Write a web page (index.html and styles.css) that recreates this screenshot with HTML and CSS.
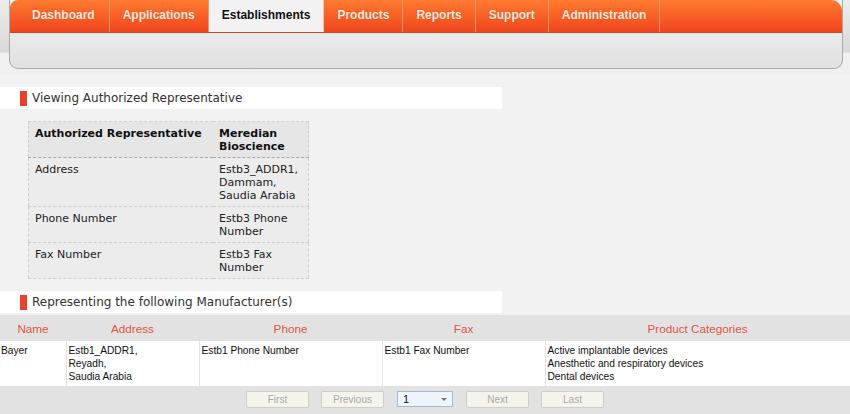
FILE: index.html
```html
<!DOCTYPE html>
<html lang="en">
<head>
    <meta charset="UTF-8">
    <title>Establishments</title>
    <link rel="stylesheet" href="styles.css">
</head>
<body>

    <div class="header">
        <div class="nav-box">
            <ul class="tabs">
                <li class="tab">Dashboard</li>
                <li class="tab">Applications</li>
                <li class="tab active">Establishments</li>
                <li class="tab">Products</li>
                <li class="tab">Reports</li>
                <li class="tab">Support</li>
                <li class="tab">Administration</li>
            </ul>
            <div class="subbar"></div>
        </div>
    </div>

    <div class="section-title"><span class="marker"></span>Viewing Authorized Representative</div>

    <table class="details">
        <tr class="head">
            <td class="label">Authorized Representative</td>
            <td class="value">Meredian Bioscience</td>
        </tr>
        <tr>
            <td class="label">Address</td>
            <td class="value">Estb3_ADDR1,<br>Dammam,<br>Saudia Arabia</td>
        </tr>
        <tr>
            <td class="label">Phone Number</td>
            <td class="value">Estb3 Phone Number</td>
        </tr>
        <tr>
            <td class="label">Fax Number</td>
            <td class="value">Estb3 Fax Number</td>
        </tr>
    </table>

    <div class="section-title second"><span class="marker"></span>Representing the following Manufacturer(s)</div>

    <table class="grid">
        <tr class="grid-head">
            <th class="c-name">Name</th>
            <th class="c-addr">Address</th>
            <th class="c-phone">Phone</th>
            <th class="c-fax">Fax</th>
            <th class="c-cat">Product Categories</th>
        </tr>
        <tr class="grid-row">
            <td>Bayer</td>
            <td>Estb1_ADDR1,<br>Reyadh,<br>Saudia Arabia</td>
            <td>Estb1 Phone Number</td>
            <td>Estb1 Fax Number</td>
            <td>Active implantable devices<br>Anesthetic and respiratory devices<br>Dental devices</td>
        </tr>
        <tr class="grid-foot">
            <td colspan="5">
                <div class="pager">
                    <button class="pager-btn" disabled>First</button>
                    <button class="pager-btn" disabled>Previous</button>
                    <div class="page-select">1<span class="arrow"></span></div>
                    <button class="pager-btn" disabled>Next</button>
                    <button class="pager-btn" disabled>Last</button>
                </div>
            </td>
        </tr>
    </table>

</body>
</html>
```

FILE: styles.css
```css
body {
    margin: 0;
    background-color: #f2f2f2;
    font-family: "DejaVu Sans", Verdana, sans-serif;
    color: #222;
}

.header {
    padding: 0 7px 0 9px;
    height: 74px;
    background: linear-gradient(#ececec, #d9d9d9 70%, #f0f0f0 72%);
}

.nav-box {
    border: 1px solid #a9a9a9;
    border-top: none;
    border-radius: 0 0 9px 9px;
    background: linear-gradient(#f4f4f4, #e1e1e1);
    overflow: hidden;
}

.tabs {
    display: flex;
    margin: 0;
    padding: 0;
    list-style: none;
    height: 32px;
    background: linear-gradient(#ff7a30, #f0451d);
    border-bottom: 1px solid #c8482c;
    border-radius: 8px 11px 0 0;
}

.tab {
    padding: 0 13px;
    line-height: 31px;
    font-family: "Liberation Sans", Arial, sans-serif;
    font-weight: bold;
    font-size: 12px;
    color: #fde9dc;
    text-shadow: 0 0 1px #e0542a;
    border-right: 1px solid #f79a6c;
}

.tab:first-child {
    padding: 0 14px 0 22px;
}

.tab.active {
    background: #f2f2f2;
    color: #111;
    text-shadow: none;
    border-bottom: 1px solid #f2f2f2;
    border-right: 1px solid #f0c0a8;
}

.subbar {
    height: 35px;
}

.section-title {
    display: flex;
    align-items: center;
    width: 490px;
    height: 22px;
    margin-top: 13px;
    padding-left: 12px;
    background-color: #fff;
    font-size: 12px;
    color: #333;
}

.section-title.second {
    margin-top: 12px;
}

.marker {
    display: inline-block;
    width: 7px;
    height: 15px;
    margin: 0 5px 0 8px;
    background-color: #e8422c;
}

.details {
    margin: 12px 0 0 28px;
    width: 281px;
    table-layout: fixed;
    border-collapse: collapse;
    border: 1px dashed #cfcfcf;
    background-color: #ececec;
    font-size: 11px;
}

.details td {
    padding: 5px 4px 4px 6px;
    line-height: 13px;
    vertical-align: top;
    border-bottom: 1px dashed #cfcfcf;
}

.details tr.head td {
    font-weight: bold;
    color: #111;
    background-color: #e6e6e6;
    border-bottom: 1px dashed #a9a9a9;
}

.details .label {
    width: 174px;
}

.grid {
    width: 100%;
    margin-top: 2px;
    border-collapse: collapse;
    table-layout: fixed;
    font-family: "Liberation Sans", Arial, sans-serif;
}

.grid th {
    height: 26px;
    padding: 0;
    font-weight: normal;
    font-size: 11.7px;
    color: #e0553f;
    background-color: #e2e2e2;
}

.c-name { width: 66px; }
.c-addr { width: 133px; }
.c-phone { width: 183px; }
.c-fax { width: 163px; }

.grid-row td {
    padding: 3px 2px;
    height: 39px;
    font-size: 10.2px;
    line-height: 13px;
    color: #111;
    vertical-align: top;
    background-color: #fff;
    border-left: 1px solid #e4e4e4;
}

.grid-row td:first-child {
    padding-left: 1px;
    border-left: none;
}

.grid-foot td {
    height: 29px;
    padding: 0;
    background-color: #e2e2e2;
}

.pager {
    display: flex;
    justify-content: center;
    align-items: flex-start;
    gap: 12px;
    height: 29px;
    padding-top: 5px;
    box-sizing: border-box;
}

.pager-btn {
    width: 63px;
    height: 17px;
    padding: 0;
    border: 1px solid #cfcfc4;
    border-radius: 2px;
    background-color: #f4f3ec;
    font-family: "Liberation Sans", Arial, sans-serif;
    font-size: 10px;
    color: #aaa;
}

.page-select {
    position: relative;
    width: 56px;
    height: 16px;
    margin: 0 1px;
    padding-left: 5px;
    box-sizing: border-box;
    border: 1px solid #a9b8cc;
    background-color: #eef4fc;
    font-size: 11px;
    line-height: 15px;
    color: #111;
}

.arrow {
    position: absolute;
    right: 5px;
    top: 6px;
    border-left: 3px solid transparent;
    border-right: 3px solid transparent;
    border-top: 3px solid #777;
}
```
